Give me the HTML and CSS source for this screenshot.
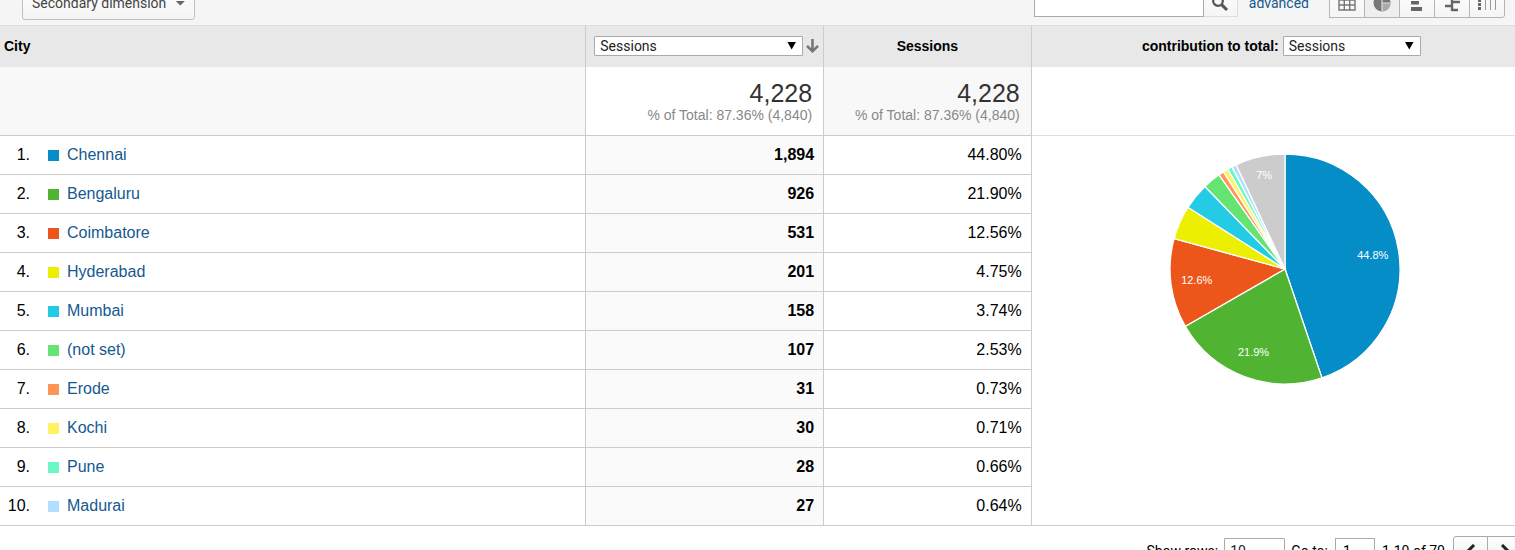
FILE: index.html
```html
<!DOCTYPE html>
<html lang="en">
<head>
    <meta charset="UTF-8">
    <meta name="viewport" content="width=device-width, initial-scale=1.0">
    <title>Sessions by City</title>
    <link rel="stylesheet" href="styles.css">
</head>
<body>
    <div class="toolbar">
        <button class="dimension" type="button">Secondary dimension <span class="caret"></span></button>
        <form class="search">
            <input type="text" aria-label="Search cities">
            <button type="button" aria-label="Search">
                <svg width="18" height="18" viewBox="0 0 18 18"><circle cx="7" cy="7" r="4.8" fill="none" stroke="#555" stroke-width="2.2"/><path d="M10.6 10.6L16 16" stroke="#555" stroke-width="3"/></svg>
            </button>
        </form>
        <a class="advanced" href="#">advanced</a>
        <div class="views">
            <button type="button" aria-label="Data table">
                <svg width="18" height="18" viewBox="0 0 18 18" fill="none" stroke="#777" stroke-width="1.4"><path d="M1 1h16v15H1zM1 6h16M1 11h16M6.3 1v15M11.7 1v15"/></svg>
            </button>
            <button class="active" type="button" aria-label="Percentage">
                <svg width="18" height="18" viewBox="0 0 18 18"><circle cx="9" cy="9" r="8.5" fill="#777"/><path d="M9 9h8.500A8.500 8.500 0 0 1 9 17.500z" fill="#aaa"/><path d="M9 .5V17.500M9 9h8.500" fill="none" stroke="#ddd" stroke-width="1.2"/></svg>
            </button>
            <button type="button" aria-label="Performance">
                <svg width="18" height="18" viewBox="0 0 18 18" fill="#666"><path d="M3 0h7v3H3zM3 7h8v3.500H3zM3 13h11v4H3z"/></svg>
            </button>
            <button type="button" aria-label="Comparison">
                <svg width="18" height="18" viewBox="0 0 18 18" fill="none" stroke="#666" stroke-width="2.400"><path d="M9 0v17M9 2h4M9 8h8M2 12h7M9 16h6"/></svg>
            </button>
            <button type="button" aria-label="Pivot">
                <svg width="20" height="18" viewBox="0 0 20 18" fill="none" stroke="#999"><path d="M2.500 1v15" stroke="#666" stroke-width="3" stroke-dasharray="3 1"/><path d="M8.500 1v15M13.500 1v15M18.500 1v15"/></svg>
            </button>
        </div>
    </div>

    <table class="report">
        <colgroup>
            <col class="col-city">
            <col class="col-sessions">
            <col class="col-share">
            <col>
        </colgroup>
        <thead>
            <tr>
                <th class="city-head" scope="col">City</th>
                <th scope="col">
                    <div class="metric">
                        <span class="select"><select aria-label="Metric"><option>Sessions</option></select></span>
                        <svg width="13" height="14" viewBox="0 0 13 14" fill="none" stroke="#777" stroke-width="2.600"><path d="M6.500 0v12M1 6.800l5.500 5.500L12 6.800"/></svg>
                    </div>
                </th>
                <th scope="col">Sessions</th>
                <th scope="col">
                    <div class="contribution">
                        <label for="contribution">contribution to total:</label>
                        <span class="select"><select id="contribution"><option>Sessions</option></select></span>
                    </div>
                </th>
            </tr>
        </thead>
        <tbody>
            <tr class="summary">
                <td></td>
                <td><strong>4,228</strong><small>% of Total: 87.36% (4,840)</small></td>
                <td><strong>4,228</strong><small>% of Total: 87.36% (4,840)</small></td>
                <td></td>
            </tr>
            <tr>
                <td><div class="city"><span class="rank">1.</span><i class="swatch c1"></i><a href="#">Chennai</a></div></td>
                <td>1,894</td>
                <td>44.80%</td>
                <td class="chart" rowspan="10"><svg id="pie" width="232" height="232" viewBox="-116 -116 232 232" role="img" aria-label="Sessions by city"></svg></td>
            </tr>
            <tr>
                <td><div class="city"><span class="rank">2.</span><i class="swatch c2"></i><a href="#">Bengaluru</a></div></td>
                <td>926</td>
                <td>21.90%</td>
            </tr>
            <tr>
                <td><div class="city"><span class="rank">3.</span><i class="swatch c3"></i><a href="#">Coimbatore</a></div></td>
                <td>531</td>
                <td>12.56%</td>
            </tr>
            <tr>
                <td><div class="city"><span class="rank">4.</span><i class="swatch c4"></i><a href="#">Hyderabad</a></div></td>
                <td>201</td>
                <td>4.75%</td>
            </tr>
            <tr>
                <td><div class="city"><span class="rank">5.</span><i class="swatch c5"></i><a href="#">Mumbai</a></div></td>
                <td>158</td>
                <td>3.74%</td>
            </tr>
            <tr>
                <td><div class="city"><span class="rank">6.</span><i class="swatch c6"></i><a href="#">(not set)</a></div></td>
                <td>107</td>
                <td>2.53%</td>
            </tr>
            <tr>
                <td><div class="city"><span class="rank">7.</span><i class="swatch c7"></i><a href="#">Erode</a></div></td>
                <td>31</td>
                <td>0.73%</td>
            </tr>
            <tr>
                <td><div class="city"><span class="rank">8.</span><i class="swatch c8"></i><a href="#">Kochi</a></div></td>
                <td>30</td>
                <td>0.71%</td>
            </tr>
            <tr>
                <td><div class="city"><span class="rank">9.</span><i class="swatch c9"></i><a href="#">Pune</a></div></td>
                <td>28</td>
                <td>0.66%</td>
            </tr>
            <tr>
                <td><div class="city"><span class="rank">10.</span><i class="swatch c10"></i><a href="#">Madurai</a></div></td>
                <td>27</td>
                <td>0.64%</td>
            </tr>
        </tbody>
    </table>

    <div class="footer">
        <label for="rows">Show rows:</label>
        <span class="select"><select id="rows"><option>10</option></select></span>
        <label for="goto">Go to:</label>
        <input id="goto" type="text" value="1">
        <span>1-10 of 70</span>
        <div class="pager">
            <button type="button" aria-label="Previous page"><svg width="12" height="14" viewBox="0 0 12 14" fill="none" stroke="#222" stroke-width="3"><path d="M9 1L3 7l6 6"/></svg></button>
            <button type="button" aria-label="Next page"><svg width="12" height="14" viewBox="0 0 12 14" fill="none" stroke="#222" stroke-width="3"><path d="M3 1l6 6-6 6"/></svg></button>
        </div>
    </div>

    <script src="script.js"></script>
</body>
</html>
```
FILE: styles.css
```css
* {
    box-sizing: border-box;
}
body {
    margin: 0;
    height: 100vh;
    overflow: hidden;
    background: #fff;
    color: #000;
    font-family: "Liberation Sans", Arial, sans-serif;
    font-size: 16px;
}
a {
    color: #15598f;
    text-decoration: none;
}
button, input, select {
    font-family: Roboto, sans-serif;
    font-size: 14px;
    margin: 0;
}
button {
    display: flex;
    align-items: center;
    justify-content: center;
    padding: 0;
    border: 1px solid #c0c0c0;
    background: linear-gradient(#fdfdfd, #f5f5f5);
    flex-shrink: 0;
}

/* toolbar, scrolled partly out of view */
.toolbar {
    display: flex;
    align-items: center;
    height: 44px;
    margin-top: -19px;
    padding: 0 10px 0 22px;
    background: #f5f5f5;
    font-family: Roboto, sans-serif;
}
.dimension {
    height: 34px;
    gap: 9px;
    padding: 0 9px;
    border-radius: 3px;
    color: #444;
}
.caret {
    width: 10px;
    height: 5px;
    background: #666;
    clip-path: polygon(0 0, 100% 0, 50% 100%);
}
.search {
    display: flex;
    margin-left: auto;
}
.search input {
    width: 170px;
    height: 28px;
    border: 1px solid #aaa;
    background: #fff;
}
.search button {
    width: 34px;
    height: 28px;
    border-color: #ddd;
    border-left: 0;
}
.advanced {
    margin: 0 20px 0 11px;
    font-size: 14px;
}
.views {
    display: flex;
}
.views button {
    width: 36px;
    height: 30px;
    border-color: #b5b5b5;
}
.views button + button {
    margin-left: -1px;
}
.views button:last-child {
    border-radius: 0 3px 3px 0;
}
.views .active {
    background: #eee;
}

/* drop-downs */
.select {
    position: relative;
    display: inline-block;
}
.select::after {
    content: "";
    position: absolute;
    top: 6px;
    right: 7px;
    width: 9px;
    height: 8px;
    background: #000;
    clip-path: polygon(0 0, 100% 0, 50% 100%);
    pointer-events: none;
}
.select select {
    display: block;
    width: 100%;
    height: 20px;
    padding: 0 5px;
    border: 1px solid #aaa;
    border-radius: 1px;
    background: #fff;
    color: #222;
    appearance: none;
}

/* report table */
.report {
    width: 100%;
    table-layout: fixed;
    border-collapse: separate;
    border-spacing: 0;
}
.col-city {
    width: 38.7%;
}
.col-sessions {
    width: 15.7%;
}
.col-share {
    width: 13.7%;
}
th {
    height: 42px;
    padding: 0 4px 2px;
    border-top: 1px solid #ddd;
    border-right: 1px solid #ccc;
    background: #e8e8e8;
    font-size: 14px;
}
.city-head {
    text-align: left;
}
.metric {
    display: flex;
    align-items: center;
    gap: 3px;
    padding-left: 4px;
}
.metric .select {
    flex: 1;
}
.contribution {
    display: flex;
    align-items: center;
    justify-content: center;
    gap: 4px;
    padding-left: 16px;
}
.contribution .select {
    width: 138px;
}
td {
    height: 39px;
    padding: 0 9px;
    border-right: 1px solid #ccc;
    border-bottom: 1px solid #ccc;
    text-align: right;
}
th:nth-child(4), td:nth-child(4) {
    border-right: 0;
}
td:first-child {
    padding: 0;
    text-align: left;
}
td:nth-child(2) {
    background: #fafafa;
    font-weight: bold;
}
.summary td {
    height: 69px;
    padding: 0 11px;
    background: #f8f8f8;
    font-weight: normal;
}
.summary td:nth-child(2), .summary td:last-child {
    background: #fff;
}
.summary td:last-child {
    border-color: #e0e0e0;
}
.summary strong, .summary small {
    display: block;
}
.summary strong {
    color: #333;
    font-size: 25px;
    font-weight: normal;
    line-height: 28px;
}
.summary small {
    color: #888;
    font-size: 14px;
    line-height: 16px;
}
.city {
    display: flex;
    align-items: center;
}
.rank {
    width: 30px;
    margin-right: 18px;
    text-align: right;
}
.swatch {
    width: 11px;
    height: 11px;
    margin-right: 8px;
}
.c1 { background: #058dc7; fill: #058dc7; }
.c2 { background: #50b432; fill: #50b432; }
.c3 { background: #ed561b; fill: #ed561b; }
.c4 { background: #edef00; fill: #edef00; }
.c5 { background: #24cbe5; fill: #24cbe5; }
.c6 { background: #64e572; fill: #64e572; }
.c7 { background: #ff9655; fill: #ff9655; }
.c8 { background: #fff263; fill: #fff263; }
.c9 { background: #6af9c4; fill: #6af9c4; }
.c10 { background: #b2deff; fill: #b2deff; }
.other { fill: #ccc; }
.report .chart {
    padding: 17px 0 0 24px;
    text-align: center;
    vertical-align: top;
}
#pie path {
    stroke: #fff;
    stroke-width: 1.3;
}
#pie text {
    fill: #fff;
    font-size: 11px;
    text-anchor: middle;
}

/* paging */
.footer {
    display: flex;
    align-items: center;
    justify-content: flex-end;
    height: 49px;
    margin-right: -7px;
    font-family: Roboto, sans-serif;
    font-size: 14px;
}
.footer .select {
    width: 61px;
    margin: 0 6px;
}
.footer .select select, .footer input {
    height: 26px;
}
.footer .select::after {
    top: 12px;
    height: 5px;
}
.footer input {
    width: 40px;
    margin: 0 7px;
    padding: 0 7px;
    border: 1px solid #aaa;
}
.pager {
    display: flex;
    margin-left: 8px;
}
.pager button {
    width: 35px;
    height: 30px;
    border-color: #aaa;
    border-radius: 3px 0 0 3px;
    background: linear-gradient(#fff, #eee);
}
.pager button + button {
    margin-left: -1px;
    border-radius: 0 3px 3px 0;
}
```
FILE: script.js
```javascript
const slices = [
    { name: "c1", value: 1894, label: "44.8%" },
    { name: "c2", value: 926, label: "21.9%" },
    { name: "c3", value: 531, label: "12.6%" },
    { name: "c4", value: 201 },
    { name: "c5", value: 158 },
    { name: "c6", value: 107 },
    { name: "c7", value: 31 },
    { name: "c8", value: 30 },
    { name: "c9", value: 28 },
    { name: "c10", value: 27 },
    { name: "other", value: 295, label: "7%" }
];
const total = slices.reduce((sum, slice) => sum + slice.value, 0);
const radius = 115;

function point(share, r) {
    let angle = share * 2 * Math.PI;
    return [Math.sin(angle) * r, -Math.cos(angle) * r];
}

let paths = "";
let labels = "";
let start = 0;
slices.forEach(function(slice) {
    let end = start + slice.value / total;
    paths += `<path class="${slice.name}" d="M0 0L${point(start, radius)}A${radius} ${radius} 0 0 1 ${point(end, radius)}Z"/>`;
    if (slice.label) {
        // short labels fit closer to the rim
        let labelRadius = slice.label.length < 4 ? 96 : 89;
        let [x, y] = point((start + end) / 2, labelRadius);
        labels += `<text x="${x}" y="${y + 4}">${slice.label}</text>`;
    }
    start = end;
});
document.getElementById("pie").innerHTML = paths + labels;
```
